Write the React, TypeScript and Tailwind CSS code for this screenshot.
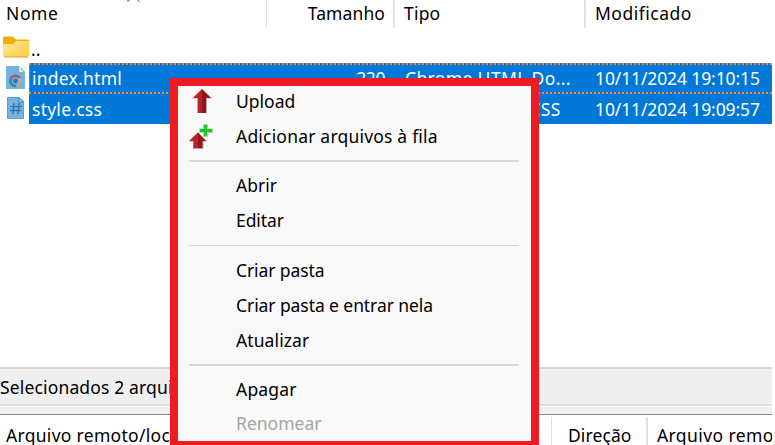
import type { ReactNode } from "react";

function FolderIcon() {
  return (
    <svg className="block h-[22px] w-[27px]" viewBox="0 0 27 22">
      <defs>
        <linearGradient id="folder" x1="0" y1="0" x2="1" y2="1">
          <stop offset="0" stopColor="#ffe9a2" />
          <stop offset="1" stopColor="#ffc93c" />
        </linearGradient>
      </defs>
      <path d="M0 1.500Q0 .5 1 .5H10L13 3.500H25Q26 3.500 26 5V20H0Z" fill="#f3ae08" />
      <path d="M0 8H10L13 5H26V20Q26 21 25 21H1Q0 21 0 20Z" fill="url(#folder)" />
      <path d="M1 21H25" stroke="#dfa62c" />
    </svg>
  );
}

function ChromeFileIcon() {
  return (
    <svg className="block h-[24px] w-[21px]" viewBox="0 0 21 24">
      <path d="M1 0H14L20 6V23H1Z" fill="#73b3e4" />
      <path d="M14 0L20 6H14Z" fill="#d2edf5" />
      <path d="M16 2L20 7" stroke="#9bcf17" strokeWidth="1.2" />
      <circle cx="10.500" cy="15" r="6.500" fill="#3d8f80" />
      <path d="M4.800 11.800A6.500 6.500 0 0 1 16.200 11.800L10.500 12L8 16.500Z" fill="#98667c" />
      <path d="M16.200 11.800A6.500 6.500 0 0 1 10 21.500L13.500 16L13 12Z" fill="#b0ad88" />
      <circle cx="10.500" cy="15" r="3.400" fill="#8dbbea" />
      <circle cx="10.500" cy="15" r="2.500" fill="#187ce0" />
    </svg>
  );
}

function CssFileIcon() {
  return (
    <svg className="block h-[23px] w-[19px]" viewBox="0 0 19 23">
      <path d="M.5 .5H12L16.500 5V21.500H.5Z" fill="#73b3e4" stroke="#5c9fd0" />
      <path d="M12 .5V5H16.500Z" fill="#a9d6f4" stroke="#4583b5" />
      <path d="M7 6L6 17M12 6L11 17M3.500 9.500H15M3 13.500H14.500" stroke="#2e74a8" strokeWidth="1.3" fill="none" />
    </svg>
  );
}

function UploadIcon() {
  return (
    <svg className="block h-[25px] w-[20px]" viewBox="0 0 20 25">
      <path d="M10 0L20 9.500H15V24H5V9.500H0Z" fill="#c4a5a7" />
      <path d="M10 0L1 9H6V24H10Z" fill="#bd2027" />
      <path d="M10 0L19 9H14V24H10Z" fill="#8f171c" />
    </svg>
  );
}

function AddToQueueIcon() {
  return (
    <svg className="block h-[25px] w-[26px]" viewBox="0 0 26 25">
      <path d="M10 8.500L19 17.500H15.500V25H5V17.500H1Z" fill="#c4a5a7" />
      <path d="M10 8.500L1 17H5.500V24H10Z" fill="#bd2027" />
      <path d="M10 8.500L18 17H14.500V24H10Z" fill="#8f171c" />
      <path d="M15 0H20V4.500H25V9H20V13H15V9H11V4.500H15Z" fill="#a5dfa7" />
      <path d="M16 1H19V5H24V8H19V12H16V8H12V5H16Z" fill="#22c52b" />
    </svg>
  );
}

function MenuItem({ label, icon, className = "h-[35px]", labelClass = "" }: { label: string; icon?: ReactNode; className?: string; labelClass?: string }) {
  return (
    <div className={`flex items-center ${className}`}>
      <div className="flex w-[58px] shrink-0 pl-[12px]">{icon}</div>
      <span className={`pb-[2px] ${labelClass}`}>{label}</span>
    </div>
  );
}

function Separator({ className }: { className: string }) {
  return (
    <div className={`pr-[12px] pl-[11px] ${className}`}>
      <div className="h-full bg-[#d7d7d7]" />
    </div>
  );
}

function ContextMenu() {
  return (
    <div className="absolute top-[78px] left-[170px] h-[367px] w-[369px] border-x-8 border-t-8 border-b-4 border-[#ed1c24] bg-[#f9f9f9]">
      <MenuItem label="Upload" icon={<span className="ml-[2px]"><UploadIcon /></span>} className="h-[33px] pb-[2px]" />
      <MenuItem label="Adicionar arquivos à fila" icon={<span className="-ml-[2px]"><AddToQueueIcon /></span>} labelClass="tracking-[0.2px]" />
      <Separator className="mt-[6px] mb-[6px] h-[2px]" />
      <MenuItem label="Abrir" />
      <MenuItem label="Editar" labelClass="tracking-[-0.1px]" />
      <Separator className="mt-[7px] mb-[7px] h-px" />
      <MenuItem label="Criar pasta" labelClass="tracking-[-0.1px]" />
      <MenuItem label="Criar pasta e entrar nela" labelClass="tracking-[-0.08px]" />
      <MenuItem label="Atualizar" labelClass="tracking-[0.1px]" />
      <Separator className="mt-[6px] mb-[6px] h-[2px]" />
      <MenuItem label="Apagar" labelClass="tracking-[0.2px]" />
      <div className="text-[#a5a5a5]">
        <MenuItem label="Renomear" className="h-[34px]" />
      </div>
    </div>
  );
}

function FileRow({ icon, name, size, type, date, focused = false }: { icon: ReactNode; name: string; size: string; type: string; date: string; focused?: boolean }) {
  return (
    <div className={`flex ${focused ? "h-[31px]" : "h-[30px]"}`}>
      <div className="flex w-[29px] shrink-0 items-start pt-[3px] pl-[5px]">{icon}</div>
      <div className={`flex w-[743px] items-center bg-[#0078d7] text-white ${focused ? "border-y-2 border-l border-dotted border-[#ff8728] pb-px" : "pb-px pl-px"}`}>
        <span className="w-[240px] pl-[2px] tracking-[0.25px]">{name}</span>
        <span className="w-[115px] text-right tracking-[-0.4px]">{size}</span>
        <span className="w-[190px] pl-[20px] tracking-[0.35px]">{type}</span>
        <span className="pl-[20px] tracking-[-0.12px]">{date}</span>
      </div>
    </div>
  );
}

export default function App() {
  return (
    <div className="relative flex h-[445px] w-[775px] flex-col overflow-hidden bg-white font-['Noto_Sans',sans-serif] text-[17.5px] leading-[24px] whitespace-nowrap text-black">
      <header className="relative flex h-[33px] shrink-0 pb-[5px]">
        <div className="flex w-[267px] items-center border-r border-[#e2e2e2] pb-[2px] pl-[6px] tracking-[0.6px]">Nome</div>
        <div className="flex w-[128px] items-center justify-end border-r-2 border-[#e2e2e2] pr-[8px] pb-[2px] tracking-[0.1px]">Tamanho</div>
        <div className="flex w-[191px] items-center border-r-2 border-[#e2e2e2] pb-[2px] pl-[9px] tracking-[0.2px]">Tipo</div>
        <div className="flex items-center pb-[2px] pl-[9px] tracking-[0.5px]">Modificado</div>
        <svg className="absolute top-0 left-[126px] h-[3px] w-[14px]" viewBox="0 0 14 3">
          <path d="M1 0H4V1H3V2H1ZM11 0H13V1H14V2H12V1H11Z" fill="#aaa" />
        </svg>
      </header>
      <div className="flex h-[30px] shrink-0 items-center pb-[2px] pl-[3px]">
        <FolderIcon />
        <span className="pt-[3px] pl-px">..</span>
      </div>
      <FileRow icon={<ChromeFileIcon />} name="index.html" size="220" type="Chrome HTML Do..." date="10/11/2024 19:10:15" focused />
      <FileRow icon={<span className="pl-[2px]"><CssFileIcon /></span>} name="style.css" size="109" type="Arquivo Fonte CSS" date="10/11/2024 19:09:57" />
      <div className="grow" />
      <div className="flex h-[39px] w-[772px] shrink-0 items-center border-t-2 border-b-2 border-t-[#d5d5d5] border-b-[#e0e0e0] bg-[#efefef] tracking-[0.15px]">Selecionados 2 arquivos.</div>
      <div className="h-[8px] w-[772px] shrink-0 border-t border-white bg-[#f0f0f0]" />
      <div className="flex h-[31px] w-[772px] shrink-0 overflow-hidden border-t border-[#828790] pt-[2px]">
        <div className="w-[552px] shrink-0 border-r border-[#e2e2e2] pt-[6px] pl-[6px] leading-[24px] tracking-[0.3px]">Arquivo remoto/local</div>
        <div className="w-[96px] shrink-0 border-r-2 border-[#e2e2e2] pt-[6px] pl-[16px] leading-[24px] tracking-[0.1px]">Direção</div>
        <div className="pt-[6px] pl-[9px] leading-[24px] tracking-[0.4px]">Arquivo remoto</div>
      </div>
      <ContextMenu />
    </div>
  );
}
